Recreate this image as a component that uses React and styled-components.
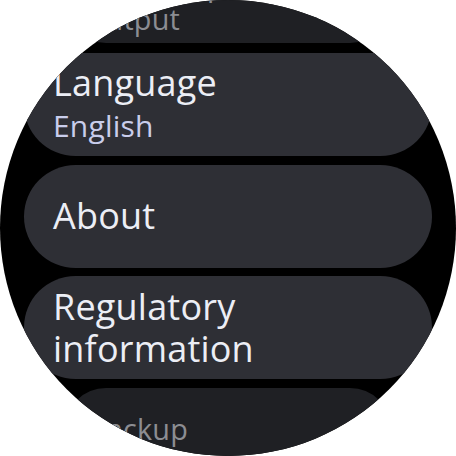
import React from 'react';
import styled, { createGlobalStyle } from 'styled-components';

const GlobalStyle = createGlobalStyle`
  html, body {
    margin: 0;
    padding: 0;
    background: #ffffff;
  }
`;

const Screen = styled.div`
  width: 456px;
  height: 456px;
  border-radius: 50%;
  overflow: hidden;
  background: #000000;
  font-family: 'Open Sans', 'Noto Sans', sans-serif;
`;

const List = styled.div`
  display: flex;
  flex-direction: column;
  align-items: center;
  gap: 8.5px;
  margin-top: -39px;
`;

const Chip = styled.div`
  flex: none;
  box-sizing: border-box;
  width: ${(props) => (props.$edge ? '326px' : '408px')};
  height: ${(props) => (props.$edge ? '82px' : '103px')};
  padding: 0 ${(props) => (props.$edge ? '23px' : '29px')};
  border-radius: ${(props) => (props.$edge ? '41px' : '52px')};
  background: ${(props) => (props.$edge ? '#1f2024' : '#2e2f35')};
  margin-bottom: ${(props) => (props.$first ? '1.5px' : '0')};

  display: flex;
  flex-direction: column;
  justify-content: center;
`;

const Title = styled.div`
  color: ${(props) => (props.$edge ? '#8c8d92' : '#eceef5')};
  font-size: ${(props) => (props.$edge ? '28.8px' : '36px')};
  line-height: ${(props) => (props.$edge ? '33.6px' : '42px')};
  letter-spacing: 0.2px;
  font-weight: 400;
`;

const Subtitle = styled.div`
  color: #c9cdeb;
  font-size: 30px;
  line-height: 43px;
  letter-spacing: 0.2px;
  font-weight: 400;
`;

const items = [
  { title: 'Text-to-speech output', edge: true, first: true },
  { title: 'Language', subtitle: 'English' },
  { title: 'About' },
  { title: 'Regulatory information' },
  { title: 'Backup', edge: true },
];

const App = () => (
  <>
    <GlobalStyle />
    <Screen>
      <List>
        {items.map((item) => (
          <Chip key={item.title} $edge={item.edge} $first={item.first}>
            <Title $edge={item.edge}>{item.title}</Title>
            {item.subtitle && <Subtitle>{item.subtitle}</Subtitle>}
          </Chip>
        ))}
      </List>
    </Screen>
  </>
);

export default App;
